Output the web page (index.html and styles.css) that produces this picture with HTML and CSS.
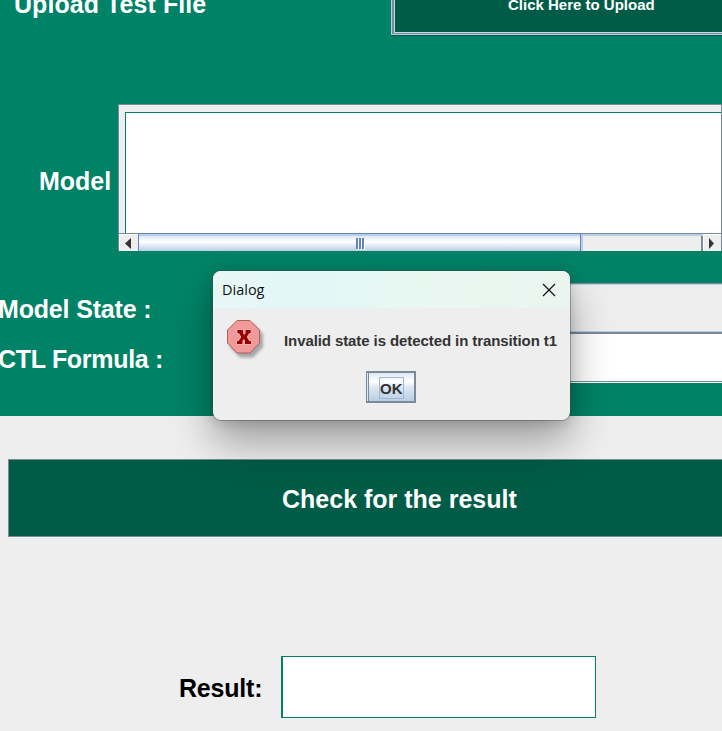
FILE: index.html
```html
<!DOCTYPE html>
<html lang="en">
<head>
<meta charset="utf-8">
<title>Model Checker</title>
<link rel="stylesheet" href="styles.css">
</head>
<body>
<main class="form">
  <div class="row upload-row">
    <span class="label upload-label">Upload Test File</span>
    <div class="upload-button"><span>Click Here to Upload</span></div>
  </div>
  <div class="row model-row">
    <span class="label model-label">Model</span>
    <div class="scroll-pane">
      <div class="viewport"><div class="text-area"></div></div>
      <div class="scrollbar">
        <div class="arrow arrow-left"><svg width="7" height="11" viewBox="0 0 7 11"><path d="M6 0v11L0 5.5z"/></svg></div>
        <div class="thumb"><i></i><i></i><i></i></div>
        <div class="track"></div>
        <div class="arrow arrow-right"><svg width="7" height="11" viewBox="0 0 7 11"><path d="M1 0v11L6 5.5z"/></svg></div>
      </div>
    </div>
  </div>
  <div class="fields">
    <div class="row field-row">
      <span class="label state-label">Model State :</span>
      <div class="combo"></div>
    </div>
    <div class="row field-row">
      <span class="label ctl-label">CTL Formula :</span>
      <div class="text-field"></div>
    </div>
  </div>
</main>
<section class="results">
  <div class="check-button"><span>Check for the result</span></div>
  <div class="result-row">
    <span class="label result-label">Result:</span>
    <div class="result-field"></div>
  </div>
</section>
<div class="dialog" role="dialog">
  <header class="title-bar">
    <span>Dialog</span>
    <svg width="14" height="14" viewBox="0 0 14 14"><path d="M1 1l12 12M13 1L1 13" fill="none" stroke="#111" stroke-width="1.2"/></svg>
  </header>
  <div class="message">
    <svg class="error-icon" width="38" height="38" viewBox="0 0 38 38">
      <path class="octagon" d="M10 .5h13l9.500 9.500v13l-9.500 10h-13l-9.500-10v-13z"/>
      <path class="cross" d="M10 9.500h6.500v3.500l.8 1.500l.8-1.500v-3.500h6v4h-1.800l-2 3.500l2 3.500h2.200v4h-7v-3.500l-.8-1.500l-.8 1.500v3.500h-6.300v-4h2l2.200-3.500l-2-3.500h-1.800z"/>
    </svg>
    <span>Invalid state is detected in transition t1</span>
  </div>
  <div class="ok-button"><span>OK</span></div>
</div>
</body>
</html>
```
FILE: styles.css
```css
* { box-sizing: border-box; }
body {
  margin: 0;
  width: 722px;
  height: 731px;
  overflow: hidden;
  position: relative;
  background: #eee;
  font-family: "Liberation Sans", Arial, sans-serif;
  font-weight: bold;
}
span { white-space: nowrap; }
svg { display: block; }
.form {
  height: 416px;
  background: #008266;
  overflow: hidden;
}
.row { display: flex; }
.label {
  flex: none;
  color: #fff;
  font-size: 25px;
  line-height: 30px;
}
.upload-row { height: 104px; align-items: flex-start; }
.upload-label { width: 391px; padding-left: 14px; margin-top: -11px; letter-spacing: .06px; }
.upload-button {
  width: 400px;
  flex: none;
  height: 35px;
  border: solid #b8cfe5;
  border-width: 0 0 1px 1px;
  box-shadow: 0 1px #005c46, inset 2px -1px #7a8a99, inset 3px -2px #c8d8e8;
  background: #005c46;
  color: #fff;
  font-size: 15px;
  line-height: 17px;
  padding-left: 116px;
}
.upload-button span { display: block; margin-top: -4px; }
.model-row { height: 179px; align-items: flex-start; }
.model-label { width: 118px; padding-left: 39px; margin-top: 62px; }
.scroll-pane {
  width: 604px;
  height: 147px;
  border: solid #7a8a99;
  border-width: 1px 1px 0 1px;
  background: #eee;
}
.viewport { height: 128px; padding: 7px 0 0 6px; }
.text-area {
  height: 121px;
  background: #fff;
  border: solid #008266;
  border-width: 1px 0 0 1px;
}
.scrollbar { display: flex; height: 18px; border-top: 1px solid #7a8a99; }
.arrow { display: flex; align-items: center; justify-content: center; border: solid #fff; border-width: 1px 0 0 1px; }
.arrow path { fill: #333; }
.arrow-left { width: 19px; padding-right: 2px; }
.arrow-right { width: 18px; flex: none; padding-right: 2px; }
.thumb {
  width: 443px;
  display: flex;
  align-items: center;
  justify-content: center;
  gap: 1px;
  padding-top: 2px;
  border: solid #6382bf;
  border-width: 0 1px 0 1px;
  box-shadow: 0 -1px #6382bf;
  background: linear-gradient(#b8cfe5 0 2px, #dde8f3 2px, #fff 8px, #b8cfe5 17px);
}
.thumb i { width: 2px; height: 11px; background: #6382bf; box-shadow: 1px 1px #fff; }
.track {
  flex: 1;
  border: solid #b8cfe5;
  border-width: 2px 0 0 2px;
  box-shadow: inset -2px 0 #7a8a99;
}
.fields { height: 133px; }
.field-row { height: 50px; }
.state-label, .ctl-label { width: 232px; margin: 11px 0 0 -2px; }
.state-label { letter-spacing: -.17px; }
.ctl-label { letter-spacing: -.3px; }
.combo, .text-field { flex: 1; }
.combo {
  background: #eee;
  border: solid #7a8a99;
  border-width: 1px 0 1px 1px;
  box-shadow: inset 0 1px #b8cfe5, inset 0 -1px #b8cfe5;
}
.text-field {
  background: #fff;
  border-top: 1px solid #7a8a99;
  box-shadow: inset 0 -1px #fff, inset 0 -2px #7a8a99;
}
.results { padding: 43px 0 0 8px; }
.check-button {
  height: 78px;
  border: solid #7a8a99;
  border-width: 1px 0 1px 1px;
  background: #005c46;
  color: #fff;
  font-size: 25px;
  line-height: 78px;
  padding-left: 273px;
}
.result-row { display: flex; margin-top: 119px; }
.result-label { width: 273px; padding-left: 171px; margin-top: 17px; color: #000; letter-spacing: -.2px; }
.result-field {
  width: 315px;
  height: 62px;
  background: #fff;
  border: 1px solid #008266;
  border-left-width: 2px;
}
.dialog {
  position: absolute;
  left: 213px;
  top: 271px;
  width: 357px;
  height: 149px;
  border-radius: 8px;
  overflow: hidden;
  background: #eee;
  box-shadow: 0 0 0 1px rgba(60, 70, 70, .4), 0 22px 42px rgba(0, 0, 0, .34), 0 2px 14px rgba(0, 0, 0, .16);
}
.title-bar {
  height: 37px;
  display: flex;
  align-items: center;
  justify-content: space-between;
  padding: 0 14px 0 9px;
  background: linear-gradient(100deg, #e7f7f4, #e3f7f9 24%, #e7f8f1 55%, #ebf5f0);
  color: #111;
  font: 14.5px "Open Sans", sans-serif;
}
.message {
  height: 63px;
  display: flex;
  align-items: flex-start;
  padding: 12px 0 0 14px;
  color: #333;
  font-size: 15px;
  line-height: 18px;
}
.message span { margin: 12px 0 0 19px; letter-spacing: -.09px; }
.error-icon { flex: none; overflow: visible; filter: drop-shadow(3px 4px 1.5px rgba(0, 0, 0, .3)); }
.octagon { fill: #f29a9a; stroke: #a85f62; }
.cross { fill: #900; stroke: #ffc4c4; stroke-width: .8; }
.ok-button {
  width: 50px;
  height: 32px;
  margin-left: 153px;
  padding: 4px 0 0 12px;
  border: 2px solid #7a8a99;
  border-left: 1px solid #7a8a99;
  box-shadow: inset 1px 0 #dce8f2, inset 2px 0 #7a8a99;
  background: linear-gradient(#dde8f3, #fff 30%, #dde8f3 50%, #b8cfe5);
  color: #333;
  font-size: 15px;
  line-height: 21px;
}
.ok-button span { display: block; width: 25px; height: 22px; border: 1px solid #a3b8cc; }
```
